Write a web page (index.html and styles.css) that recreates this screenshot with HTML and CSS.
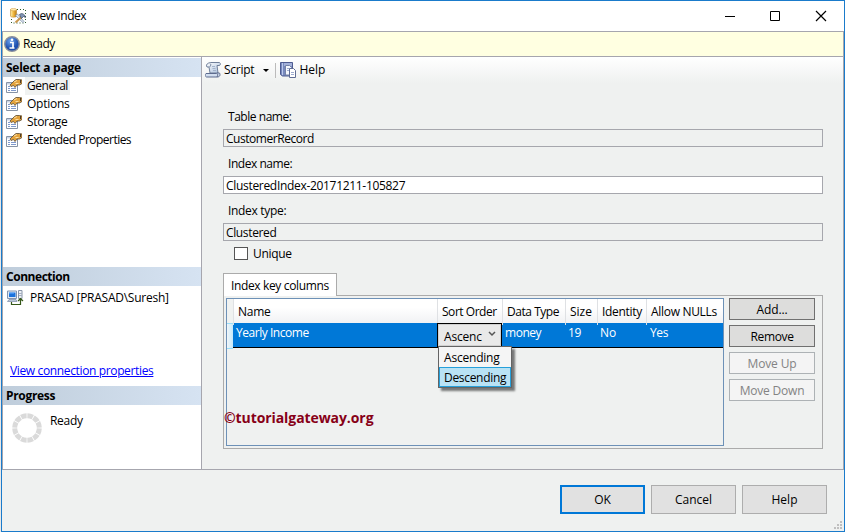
FILE: index.html
```
<!DOCTYPE html>
<html lang="en">
<head>
<meta charset="utf-8">
<title>New Index</title>
<link rel="stylesheet" href="styles.css">
</head>
<body>
<svg width="0" height="0" class="defs" aria-hidden="true">
  <defs>
    <linearGradient id="gold" x1="0" x2="1"><stop offset="0" stop-color="#fff0b0"/><stop offset=".5" stop-color="#f0b840"/><stop offset="1" stop-color="#b87c18"/></linearGradient>
    <linearGradient id="paper" x1="0" y1="0" x2="1" y2="1"><stop offset="0" stop-color="#fff"/><stop offset="1" stop-color="#a9bfdc"/></linearGradient>
    <radialGradient id="info" cx=".4" cy=".3"><stop offset="0" stop-color="#6fa5ee"/><stop offset="1" stop-color="#1d4fae"/></radialGradient>
    <symbol id="page" viewBox="0 0 16 14">
      <path d="M.5 3.500h11v10H.5z" fill="#fff" stroke="#8793a5"/>
      <path d="M1 4h10v1.500H1z" fill="#c9d3e4"/>
      <path d="M2 7.500h2M2 9.500h2M2 11.500h2M5 9.500h5M5 11.500h5" stroke="#7f99cc"/>
      <path d="M4 6l4-4 2-1.500h3.500L16 1v3.500L13.500 6H11L9 8.500 7.500 6.500 5 7.500z" fill="#e3a23b" stroke="#5c4a30" stroke-width=".8"/>
      <path d="M8 3l3-1.500M9.500 4.500h3" stroke="#ffe0a0"/>
      <path d="M14.500 1v3" stroke="#4b3b2a"/>
    </symbol>
  </defs>
</svg>
<div class="window">
  <header class="titlebar">
    <svg width="16" height="16" viewBox="0 0 16 16">
      <path d="M7 1.500h8.500v13.500H1.500V9" fill="none" stroke="#2b5a2b" stroke-dasharray="1 2"/>
      <path d="M.5 1.500v6.500c0 1.600 6 1.600 6 0V1.500z" fill="url(#gold)" stroke="#c08a2c" stroke-width=".6"/>
      <ellipse cx="3.500" cy="1.600" rx="3" ry="1.200" fill="#ffe9ae" stroke="#d09a3c" stroke-width=".5"/>
      <path d="M7 7l6.500 7" stroke="#fff" stroke-width="3"/>
      <path d="M5.500 7.500l2-1.500 6.500 7.500-1 1.200z" fill="#dce5f2" stroke="#76879e" stroke-width=".7"/>
      <path d="M11.500 9L5.500 14.500" stroke="#c9964b" stroke-width="2"/>
      <path d="M9.500 6.500c2-1.500 3.500-1 5 .5l1 2.500-2-1-2 2z" fill="#8094b4" stroke="#3d4c66" stroke-width=".7"/>
    </svg>
    <h1 class="t45">New Index</h1>
    <svg class="controls" width="102" height="12" viewBox="0 0 102 12" fill="none" stroke="#000">
      <path d="M0 6.500h10M45.500 1.500h9v9h-9z"/><path d="M91 1l10 10M101 1L91 11" stroke-width="1.200"/>
    </svg>
  </header>
  <div class="status">
    <svg width="16" height="16" viewBox="0 0 16 16"><circle cx="8" cy="8" r="7.300" fill="url(#info)" stroke="#8a8f9c" stroke-width="1.400"/><path d="M6 6.500h3v5M5.500 12h5" fill="none" stroke="#fff" stroke-width="1.700"/><circle cx="8" cy="3.800" r="1.300" fill="#fff"/></svg>
    <span class="t45">Ready</span>
  </div>
  <div class="body">
    <aside class="side">
      <section class="pages">
        <h2 class="t25">Select a page</h2>
        <ul>
          <li><svg width="16" height="14"><use href="#page"/></svg><span class="t45 current">General</span></li>
          <li><svg width="16" height="14"><use href="#page"/></svg><span class="t25">Options</span></li>
          <li><svg width="16" height="14"><use href="#page"/></svg><span class="t35">Storage</span></li>
          <li><svg width="16" height="14"><use href="#page"/></svg><span class="t50">Extended Properties</span></li>
        </ul>
      </section>
      <section class="connection">
        <h2 class="t45">Connection</h2>
        <div class="server">
          <svg width="17" height="16" viewBox="0 0 17 16"><path d="M.5 1h9v7.500h-9z" fill="#dfe8f4" stroke="#8294b0"/><path d="M2 2.500h6.500v4.500H2z" fill="#1b72dc"/><path d="M2 3h5" stroke="#6bb0ff"/><path d="M2 9.500h7l1 2H.5z" fill="#b9c5d8" stroke="#7c8ca8" stroke-width=".7"/><path d="M11.500.500h3.500v8h-3.500z" fill="#eef1f6" stroke="#8894a8"/><path d="M12 3.500h3M12 5.500h3" stroke="#a6b0c2"/><path d="M4.500 12v2.500h9V9.500M11 11l2.500-2.500L16 11" fill="none" stroke="#355718" stroke-width="1.200"/></svg>
          <span class="t25">PRASAD [PRASAD\Suresh]</span>
        </div>
        <a class="t35" href="#">View connection properties</a>
      </section>
      <section class="progress">
        <h2 class="t30">Progress</h2>
        <div class="state">
          <svg width="30" height="30" viewBox="0 0 30 30"><circle cx="15" cy="15" r="12.300" fill="none" stroke="#dadada" stroke-width="5" pathLength="120" stroke-dasharray="8.800 1.200" stroke-dashoffset="-.600"/></svg>
          <span class="t30">Ready</span>
        </div>
      </section>
    </aside>
    <main class="main">
      <nav class="toolbar">
        <svg width="16" height="16" viewBox="0 0 16 16"><path d="M3 1.500C4 .5 5 .5 6 .5h8.500c1.500 1 1 3-.5 3h-2l1 7.500H5L4 5H2C1 3.500 1.500 2 3 1.500z" fill="url(#paper)" stroke="#71809a"/><path d="M5 1.500c1.500 1 .5 2.500-.5 3.500" fill="none" stroke="#71809a"/><path d="M1 11.500h10.500c1.500 0 1.500 2 .5 3.500H1.500C0 14.500-.2 12.500 1 11.500zM12 15c3 0 3.500-2 2.500-4H12" fill="#d2deef" stroke="#5d6b8e"/><path d="M7 4.500h3M7.500 6.500h3M8 8.500h3" stroke="#a3b3cb"/></svg>
        <span class="t25">Script</span>
        <svg class="caret" width="6" height="3" viewBox="0 0 6 3"><path d="M0 0h6L3 3z"/></svg>
        <i class="divider"></i>
        <svg width="16" height="16" viewBox="0 0 16 16"><path d="M.5.500h12v13.500H2.500l-2-1.500z" fill="#7789bd" stroke="#4d5b90"/><path d="M2.500 1v12" stroke="#bcc9ec"/><path d="M4 1h8v3H4z" fill="#a3b1d9"/><path d="M5.500 3.500h4l2 2v7.500h-6z" fill="#f5f8fd" stroke="#7582a6"/><path d="M9.500 6.500h4l2 2v7h-6z" fill="#fff" stroke="#5f6c94"/><path d="M11 10.500h3M11 12.500h3M7 6.500h2M7 8.500h2" stroke="#9eacd0"/></svg>
        <span>Help</span>
      </nav>
      <form class="form">
        <label class="t45">Table name:</label>
        <div class="field t45">CustomerRecord</div>
        <label class="t45">Index name:</label>
        <div class="field editable t30">ClusteredIndex-20171211-105827</div>
        <label class="t30">Index type:</label>
        <div class="field t35">Clustered</div>
        <div class="check"><i></i><span class="t30">Unique</span></div>
        <div class="tab t35">Index key columns</div>
        <div class="panel">
          <div class="grid">
            <div class="row head">
              <span></span><span class="t25">Name</span><span class="t45">Sort Order</span><span class="t45">Data Type</span><span>Size</span><span class="t30">Identity</span><span class="t30">Allow NULLs</span>
            </div>
            <div class="row selected">
              <span></span><span class="t45">Yearly Income</span>
              <div class="combo">
                <div class="value"><span class="t20">Ascenc</span><svg width="8" height="6" viewBox="0 0 8 6"><path d="M1 1l3 3 3-3" fill="none" stroke="#555" stroke-width="1.500"/></svg></div>
                <div class="menu"><div class="t20">Ascending</div><div class="active t30">Descending</div></div>
              </div>
              <span class="t45">money</span><span class="t30">19</span><span>No</span><span class="t35">Yes</span>
            </div>
            <div class="mark">©tutorialgateway.org</div>
          </div>
          <div class="actions">
            <button type="button" class="t15">Add...</button><button type="button" class="t35">Remove</button><button type="button" class="t15" disabled>Move Up</button><button type="button" class="t20" disabled>Move Down</button>
          </div>
        </div>
      </form>
    </main>
  </div>
  <footer class="footer">
    <button class="primary">OK</button><button>Cancel</button><button>Help</button>
    <svg class="grip" width="8" height="8" viewBox="0 0 8 8" fill="#bfbfbf"><path d="M6 0h2v2H6zM3 3h2v2H3zM6 3h2v2H6zM0 6h2v2H0zM3 6h2v2H3zM6 6h2v2H6z"/></svg>
  </footer>
</div>
</body>
</html>
```
FILE: styles.css
```
* { box-sizing: border-box; }
body { margin: 0; width: 845px; height: 532px; overflow: hidden; background: #e8e8e8; color: #000; font: 12px/16px "Open Sans", "Liberation Sans", sans-serif; }
h1, h2, ul, form { margin: 0; padding: 0; font-size: 12px; }
h1 { font-weight: 400; }
svg { display: block; flex: none; }
.defs { position: absolute; }
.t15 { letter-spacing: -.15px; }
.t20 { letter-spacing: -.2px; }
.t25 { letter-spacing: -.25px; }
.t30 { letter-spacing: -.31px; }
.t35 { letter-spacing: -.36px; }
.t45 { letter-spacing: -.46px; }
.t50 { letter-spacing: -.52px; }

.window { margin-left: 1px; width: 844px; height: 532px; border: 1px solid #1a7bcb; background: #eff1f0; display: flex; flex-direction: column; }
.titlebar { height: 30px; background: #fff; display: flex; align-items: center; padding: 0 17px 0 8px; }
.titlebar h1 { margin-left: 5px; flex: 1; }
.status { height: 26px; background: #ffffe1; border: 1px solid #a6a6ae; display: flex; align-items: center; gap: 3px; padding: 0 1px; }
.body { height: 413px; display: flex; border: 1px solid #a6a6ae; border-top: 0; }

.side { width: 199px; background: #fff; border-right: 1px solid #a6a6ae; padding-top: 1px; }
.side h2 { height: 19px; line-height: 19px; padding-left: 3px; font-weight: 700; background: linear-gradient(90deg, #bfcddb, #d6e3f2); }
.pages { height: 209px; }
.pages ul { list-style: none; }
.pages li { height: 18px; display: flex; align-items: center; gap: 3px; padding-left: 3px; }
.pages li span { padding: 0 2px; line-height: 18px; }
.pages .current { background: #f0f2f1; }
.connection { height: 119px; }
.server { display: flex; gap: 6px; padding: 4px 0 0 4px; height: 77px; }
.connection a { display: block; margin-left: 7px; color: #00f; text-decoration: underline; }
.state { display: flex; padding: 8px 0 0 9px; gap: 8px; }

.main { flex: 1; }
.toolbar { height: 26px; display: flex; align-items: center; padding-left: 3px; background: linear-gradient(#fff, #eff1f0); }
.toolbar span { margin-left: 3px; }
.caret { margin: 1px 6px 0 9px; }
.divider { width: 1px; height: 15px; background: #bbb; margin-right: 4px; }
.form { padding: 26px 20px 0 21px; }
.form label { display: block; height: 20px; margin-left: 5px; }
.field { height: 18px; line-height: 17px; border: 1px solid #a6a7ad; padding-left: 2px; margin-bottom: 9px; }
.field.editable { background: #fff; }
.check { display: flex; align-items: center; gap: 5px; height: 16px; margin: -5px 0 12px 11px; }
.check i { width: 14px; height: 13px; background: #fff; border: 1px solid #555; }
.check span { padding-top: 2px; }
.tab { width: 114px; height: 23px; position: relative; line-height: 23px; margin-bottom: -1px; padding-left: 7px; background: #fff; border: 1px solid #ababab; border-bottom: 0; }
.panel { height: 154px; display: flex; gap: 5px; padding: 2px; border: 1px solid #ababab; }
.grid { width: 498px; height: 148px; border: 1px solid #6d91b7; }
.row { display: grid; grid-template-columns: 6px 204px 65px 63px 32px 49px 77px; }
.head { height: 24px; background: linear-gradient(#fff 35%, #f1f2f4); line-height: 26px; }
.head span { padding-left: 4px; border-left: 1px solid #dfe1e4; white-space: nowrap; }
.head span:first-child { background: #f0f2f1; border: 0; }
.selected { height: 25px; background: #0078d7; border-bottom: 1px solid #000; color: #fff; line-height: 19px; }
.selected > span { padding-left: 3px; white-space: nowrap; }
.selected > span:last-child { padding-left: 4px; }
.selected > span:first-child { background: linear-gradient(90deg, #f2f6f8, #c4e9fb); border: solid #99def8; border-width: 1px 0; margin-bottom: -1px; }
.combo { position: relative; width: 65px; height: 25px; color: #000; }
.value { height: 24px; width: 65px; background: #e9e9e9; border: 1px solid #000; box-shadow: inset 0 0 0 1px #d0d0d0; display: flex; align-items: center; padding: 2px 4px 0 6px; }
.value span { width: 38px; margin-right: 6px; }
.value svg { margin-top: -5px; }
.menu { position: absolute; z-index: 2; left: 1px; top: 23px; width: 74px; height: 42px; background: #f5f5f5; border: 1px solid #646464; box-shadow: 3px 3px 2px rgba(0,0,0,.5); }
.menu div { height: 20px; line-height: 21px; padding-left: 5px; }
.menu .active { background: #b9e2f4; border: 1px solid #26a0da; padding-left: 4px; line-height: 19px; }
.mark { width: 152px; margin: 60px 0 0 -3px; font-weight: 700; font-size: 14px; line-height: 20px; letter-spacing: -.08px; color: #870017; }
button { font: inherit; color: #000; padding: 0; background: #e1e1e1; border: 1px solid #adadad; }
.actions { width: 86px; display: flex; flex-direction: column; gap: 5px; }
.actions button { height: 22px; padding-top: 1px; background: #dddddc; border-color: #707070; }
.actions button:disabled { color: #838383; background: #f4f4f4; border-color: #adb2b5; }
.footer { position: relative; flex: 1; display: flex; justify-content: flex-end; gap: 6px; padding: 15px 17px 0 0; }
.footer button { width: 85px; height: 29px; }
.footer .primary { border: 2px solid #0078d7; }
.grip { position: absolute; right: 2px; bottom: 2px; }
```
